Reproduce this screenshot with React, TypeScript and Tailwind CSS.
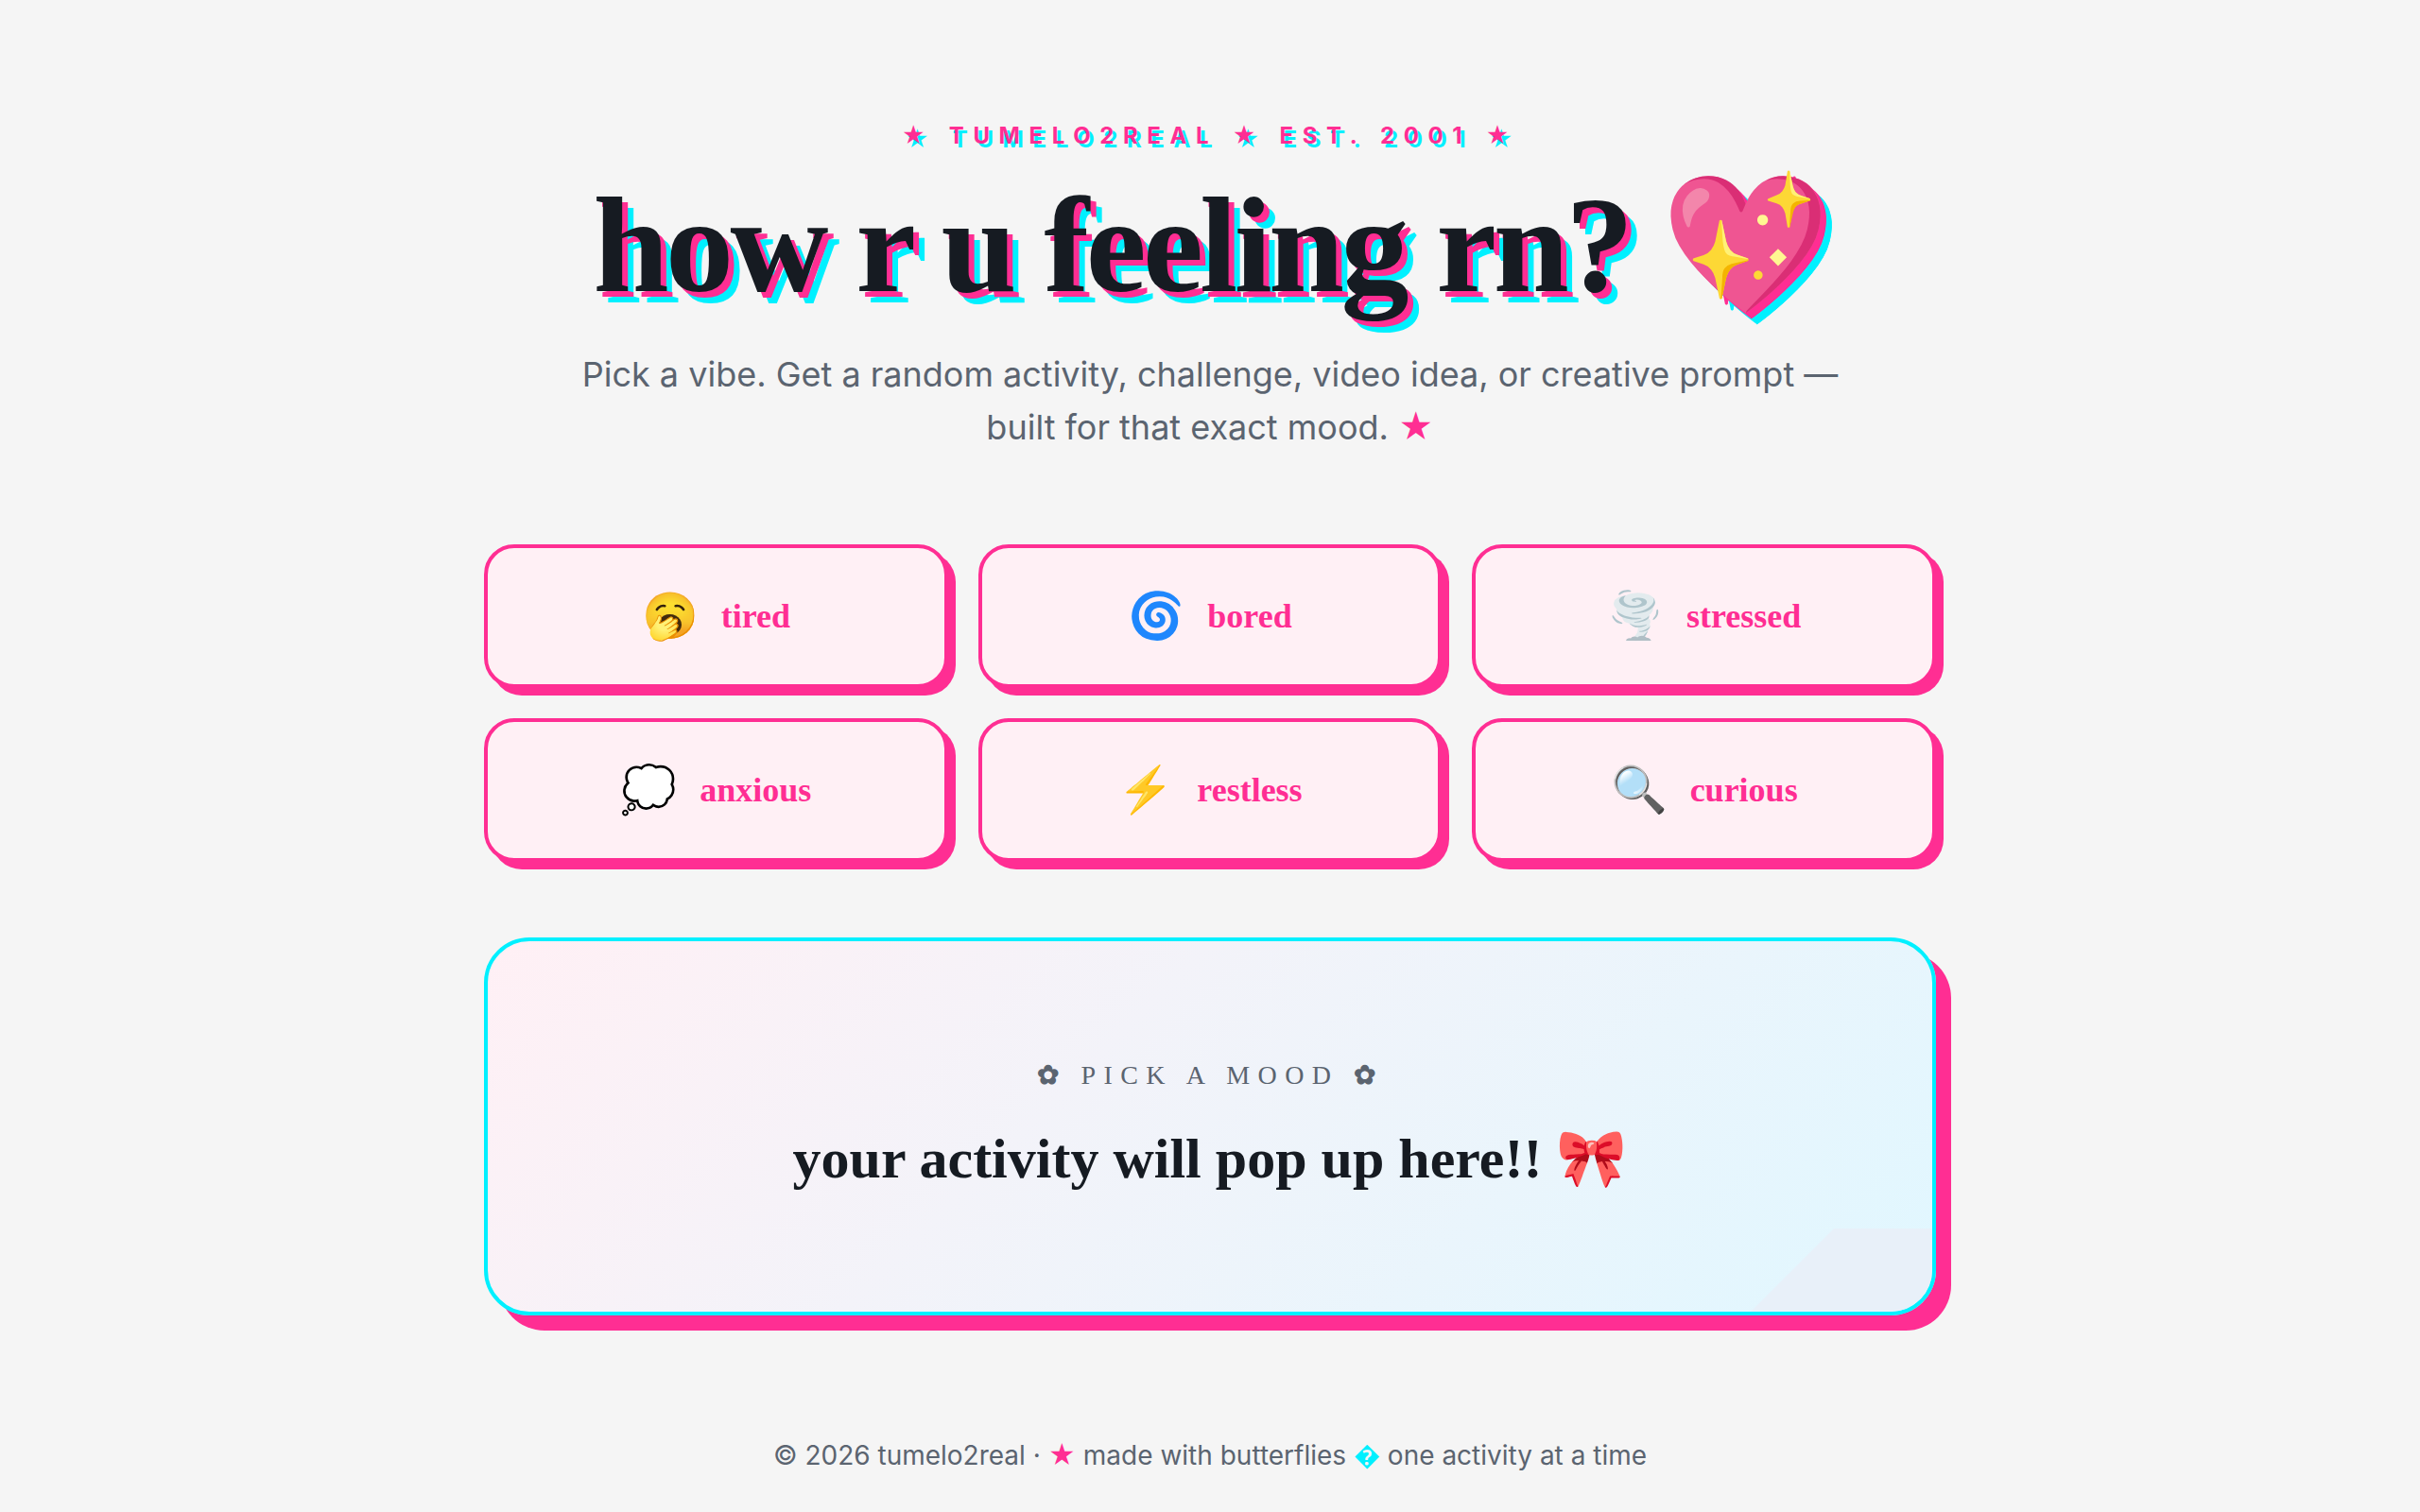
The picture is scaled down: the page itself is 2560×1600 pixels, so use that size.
import { useState } from 'react';
import clsx from 'clsx';

interface Mood {
  id: string;
  emoji: string;
}

const MOODS: Mood[] = [
  { id: 'tired', emoji: '🥱' },
  { id: 'bored', emoji: '🌀' },
  { id: 'stressed', emoji: '🌪️' },
  { id: 'anxious', emoji: '💭' },
  { id: 'restless', emoji: '⚡' },
  { id: 'curious', emoji: '🔍' },
];

const IDEAS: Record<string, string> = {
  tired: 'lie down and listen to one whole album',
  bored: 'film a 10 second tour of your desk',
  stressed: 'write it all down, then rip it up',
  anxious: 'name five blue things around you',
  restless: 'dance to three songs in a row',
  curious: 'look up how your favourite snack is made',
};

function MoodButton({ mood, active, onPick }: { mood: Mood; active: boolean; onPick: (id: string) => void }) {
  return (
    <button
      type="button"
      aria-pressed={active}
      onClick={() => onPick(mood.id)}
      className={clsx(
        "flex items-center justify-center gap-6 rounded-[32px] border-4 border-[#ff2e93] px-8 py-10 font-['Liberation_Serif',serif] font-bold text-[#ff2e93] shadow-[8px_8px_0_#ff2e93] transition-colors",
        active ? 'bg-[#ffd6e8]' : 'bg-[#fff0f5]',
      )}
    >
      <span className="text-5xl leading-[64px]">{mood.emoji}</span>
      <span className="text-4xl leading-[56px]">{mood.id}</span>
    </button>
  );
}

export default function App() {
  const [picked, setPicked] = useState<string | null>(null);

  return (
    <div className="min-h-screen bg-[#f5f5f5] px-12 font-['Inter',sans-serif] text-[#161b22]">
      <main className="mx-auto max-w-[1536px] pt-32">
        <header className="text-center">
          <p className="text-2xl leading-8 font-bold tracking-[0.4em] text-[#ff2e93] uppercase [text-shadow:4px_4px_0_#00f0ff]">
            ★ tumelo2real ★ est. 2001 ★
          </p>
          <h1 className="mt-5 font-['Liberation_Serif',serif] text-[144px] leading-[160px] font-bold tracking-tight [text-shadow:6px_6px_0_#ff2e93,12px_12px_0_#00f0ff]">
            how r u feeling rn? 💖
          </h1>
          <p className="mx-auto mt-7 max-w-[1344px] text-4xl leading-[56px] text-[#5b6470]">
            Pick a vibe. Get a random activity, challenge, video idea, or creative prompt — built for that exact mood.{' '}
            <span className="text-[#ff2e93]">★</span>
          </p>
        </header>

        <section aria-label="moods" className="mt-24 grid grid-cols-3 gap-8">
          {MOODS.map(m => (
            <MoodButton key={m.id} mood={m} active={picked === m.id} onPick={setPicked} />
          ))}
        </section>

        <section className="relative mt-20 flex min-h-[400px] flex-col items-center justify-center overflow-hidden rounded-[48px] border-4 border-[#00f0ff] bg-linear-135 from-[#fff0f5] to-[#e0f7ff] p-16 text-center font-['Liberation_Serif',serif] shadow-[16px_16px_0_#ff2e93]">
          {/* folded corner */}
          <div
            aria-hidden="true"
            className="absolute right-0 bottom-0 h-22 w-48 bg-[#e8f0f9] [clip-path:polygon(88px_0,100%_0,100%_100%,0_100%)]"
          />
          <p className="text-[28px] leading-10 tracking-[0.3em] text-[#5b6470] uppercase">
            <span className="font-bold">✿</span> {picked ?? 'pick a mood'} <span className="font-bold">✿</span>
          </p>
          <p className="mt-7 text-6xl leading-[80px] font-bold">
            {picked ? IDEAS[picked] : 'your activity will pop up here!!'} 🎀
          </p>
        </section>

        <footer className="mt-32 pb-10 text-center text-[28px] leading-10 text-[#5b6470]">
          © 2026 tumelo2real · <span className="text-[#ff2e93]">★</span> made with butterflies{' '}
          <span className="text-[#00f0ff]">{'\uFFFD'}</span> one activity at a time
        </footer>
      </main>
    </div>
  );
}
